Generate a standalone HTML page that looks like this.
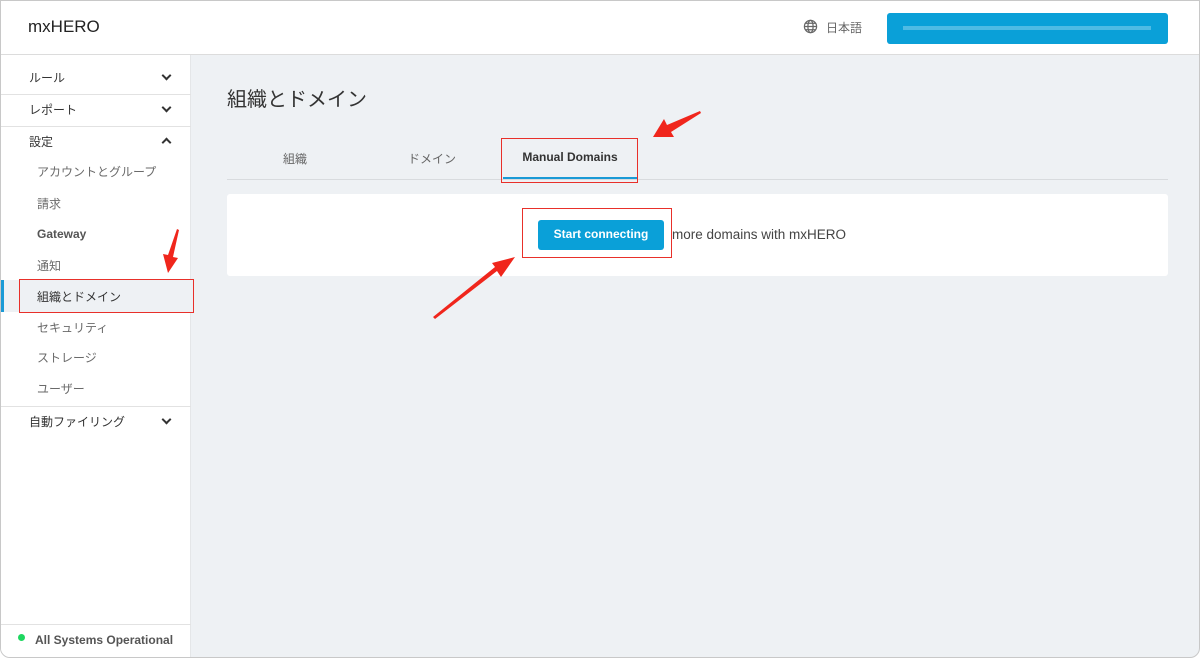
<!DOCTYPE html>
<html><head><meta charset="utf-8"><style>
*{box-sizing:border-box;margin:0;padding:0}
body{width:1200px;height:658px;background:#fff;font-family:"Liberation Sans","Noto Sans CJK JP",sans-serif;position:relative;overflow:hidden}
#frame{position:absolute;left:0;top:0;width:1200px;height:658px;border:1px solid #c8c8c8;border-radius:0 0 10px 10px;overflow:hidden;background:#eef1f4}
#hdr{position:absolute;left:0;top:0;width:1200px;height:54px;background:#fff;border-bottom:1px solid #dcdcdc}
.abs{position:absolute;white-space:nowrap}
#side{position:absolute;left:0;top:54px;width:190px;height:604px;background:#fff;border-right:1px solid #e4e6e8}
.hline{position:absolute;left:0;width:190px;height:1px;background:#e2e2e2}
.sec{font-size:12px;color:#333}
.sub{font-size:12px;color:#6a6a6a;left:36px}
.chev{position:absolute;left:162px;width:7px;height:7px;border-right:2px solid #333;border-bottom:2px solid #333;transform:rotate(45deg)}
.chev.up{transform:rotate(-135deg)}
.tab{font-size:12px;color:#666;transform:translateX(-50%)}
</style></head><body>
<div id="frame">
<div id="hdr">
 <div class="abs" style="left:27px;top:16px;font-size:17px;color:#222">mxHERO</div>
 <svg class="abs" style="left:802px;top:18px" width="15" height="15" viewBox="0 0 16 16" fill="none" stroke="#666" stroke-width="1.3"><circle cx="8" cy="8" r="6.5"/><ellipse cx="8" cy="8" rx="2.8" ry="6.5"/><path d="M1.5 8h13M2.5 4.5h11M2.5 11.5h11"/></svg>
 <div class="abs" style="left:825px;top:18px;font-size:12px;color:#666">日本語</div>
 <div class="abs" style="left:886px;top:12px;width:281px;height:31px;background:#0aa0d8;border-radius:3px"><div style="position:absolute;left:16px;top:13px;width:248px;height:4px;background:#6cc6ea;opacity:.7"></div></div>
</div>
<div id="side">
 <div class="abs sec" style="left:28px;top:14px">ルール</div><div class="chev" style="top:17px"></div>
 <div class="hline" style="top:39px"></div>
 <div class="abs sec" style="left:28px;top:46px">レポート</div><div class="chev" style="top:49px"></div>
 <div class="hline" style="top:71px"></div>
 <div class="abs sec" style="left:28px;top:78px">設定</div><div class="chev up" style="top:84px"></div>
 <div class="abs sub" style="top:108px">アカウントとグループ</div>
 <div class="abs sub" style="top:140px">請求</div>
 <div class="abs sub" style="top:172px;font-weight:bold;color:#555">Gateway</div>
 <div class="abs sub" style="top:202px">通知</div>
 <div class="abs" style="left:0;top:225px;width:190px;height:32px;background:#eef1f4"></div>
 <div class="abs" style="left:0;top:225px;width:3px;height:32px;background:#1a9ad6"></div>
 <div class="abs sub" style="top:233px;color:#333">組織とドメイン</div>
 <div class="abs sub" style="top:264px">セキュリティ</div>
 <div class="abs sub" style="top:294px">ストレージ</div>
 <div class="abs sub" style="top:325px">ユーザー</div>
 <div class="hline" style="top:351px"></div>
 <div class="abs sec" style="left:28px;top:358px">自動ファイリング</div><div class="chev" style="top:361px"></div>
 <div class="hline" style="top:569px"></div>
 <div class="abs" style="left:17px;top:579px;width:7px;height:7px;border-radius:50%;background:#1ed760"></div>
 <div class="abs" style="left:34px;top:578px;font-size:12px;font-weight:bold;color:#555">All Systems Operational</div>
</div>
<div class="abs" style="left:226px;top:82px;font-size:20px;color:#333">組織とドメイン</div>
<div class="abs tab" style="left:294px;top:149px">組織</div>
<div class="abs tab" style="left:431px;top:149px">ドメイン</div>
<div class="abs tab" style="left:569px;top:149px;font-weight:bold;color:#333">Manual Domains</div>
<div class="abs" style="left:226px;top:178px;width:941px;height:1px;background:#d8dbde"></div>
<div class="abs" style="left:502px;top:176px;width:134px;height:2px;background:#1a9ad6"></div>
<div class="abs" style="left:226px;top:193px;width:941px;height:82px;background:#fff;border-radius:3px"></div>
<div class="abs" style="left:537px;top:219px;width:126px;height:30px;background:#0aa0d8;border-radius:3px;color:#fff;font-size:12px;font-weight:bold;text-align:center;line-height:29px">Start connecting</div>
<div class="abs" style="left:671px;top:226px;font-size:13.5px;color:#444">more domains with mxHERO</div>
<div class="abs" style="left:18px;top:278px;width:175px;height:34px;border:1.5px solid #e8302a"></div>
<div class="abs" style="left:500px;top:137px;width:137px;height:45px;border:1.5px solid #e8302a"></div>
<div class="abs" style="left:521px;top:207px;width:150px;height:50px;border:1.5px solid #e8302a"></div>
<svg class="abs" style="left:0;top:0" width="1200" height="658">
 <g fill="#f0261c">
  <polygon points="176,228 178,229 172,256 177,257 167,272 162,253 167,254"/>
  <polygon points="699,110 700,112 670,131 673,136 652,136 663,118 666,124"/>
  <polygon points="432,316 434,318 496,270 500,276 514,256 491,262 494,266"/>
 </g>
</svg>
</div>
</body></html>
